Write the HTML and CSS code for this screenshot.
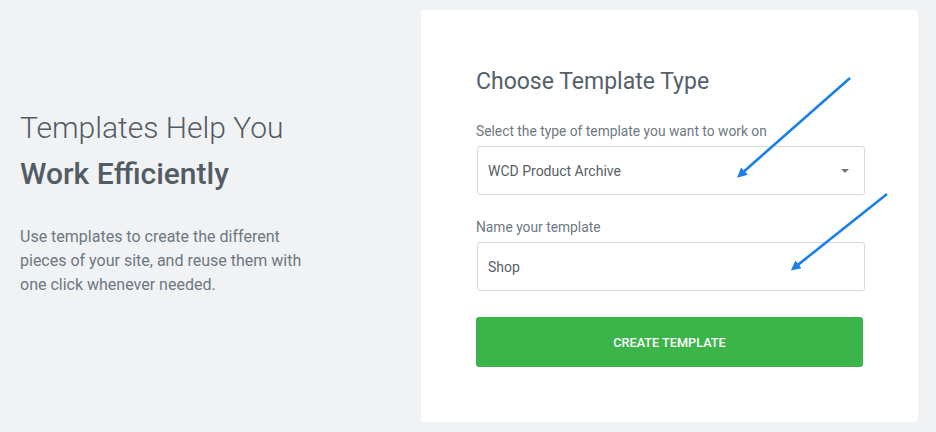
FILE: index.html
```html
<!DOCTYPE html>
<html lang="en">
<head>
    <meta charset="UTF-8">
    <meta name="viewport" content="width=device-width, initial-scale=1.0">
    <title>New Template</title>
    <link rel="stylesheet" href="styles.css">
</head>
<body>

    <div class="page">
        <div class="intro">
            <h1 class="intro-title">Templates Help You <span>Work Efficiently</span></h1>
            <p class="intro-text">Use templates to create the different pieces of your site, and reuse them with one click whenever needed.</p>
        </div>

        <form class="card">
            <h2 class="card-title">Choose Template Type</h2>

            <label class="field-label" for="templateType">Select the type of template you want to work on</label>
            <div class="select-wrap">
                <select id="templateType" class="field">
                    <option>WCD Product Archive</option>
                </select>
            </div>

            <label class="field-label name-label" for="templateName">Name your template</label>
            <input id="templateName" class="field" type="text" value="Shop">

            <button type="button" class="create-btn">Create Template</button>
        </form>
    </div>

    <!-- annotation arrows drawn over the screenshot -->
    <svg class="arrows" width="936" height="432" viewBox="0 0 936 432">
        <defs>
            <marker id="head" markerWidth="10" markerHeight="10" refX="6" refY="5" orient="auto" markerUnits="userSpaceOnUse" viewBox="0 0 10 10">
                <path d="M0 0 L10 5 L0 10 Z" fill="#1a80e8"/>
            </marker>
        </defs>
        <line x1="850" y1="78" x2="740" y2="175" stroke="#1a80e8" stroke-width="2.6" marker-end="url(#head)"/>
        <line x1="887" y1="194" x2="794" y2="268" stroke="#1a80e8" stroke-width="2.6" marker-end="url(#head)"/>
    </svg>

</body>
</html>
```

FILE: styles.css
```css
body {
    margin: 0;
    padding: 0;
    background-color: #f1f2f4;
    font-family: Roboto, "Liberation Sans", sans-serif;
    color: #556068;
}

.page {
    display: flex;
    height: 432px;
    box-sizing: border-box;
    padding: 10px 18px 10px 20px;
}

.intro {
    width: 401px;
    align-self: center;
    padding-bottom: 30px;
}

.intro-title {
    margin: 0;
    font-size: 30px;
    font-weight: 300;
    line-height: 46px;
    color: #525c65;
}

.intro-title span {
    display: block;
    font-weight: 500;
}

.intro-text {
    margin: 28px 0 0;
    width: 290px;
    font-size: 16px;
    line-height: 24px;
    color: #6d7882;
}

.card {
    position: relative;
    width: 497px;
    box-sizing: border-box;
    padding: 58px 55px 55px;
    background-color: #fff;
    border-radius: 3px;
}

.card-title {
    margin: 0 0 27px;
    font-size: 23px;
    font-weight: 400;
    line-height: 27px;
    color: #556068;
}

.field-label {
    display: block;
    font-size: 13.8px;
    line-height: 18px;
    color: #6d7882;
    margin-bottom: 6px;
}

.name-label {
    margin-top: 23px;
}

.select-wrap {
    position: relative;
}

.select-wrap::after {
    content: "";
    position: absolute;
    right: 14px;
    top: 23px;
    border-left: 4px solid transparent;
    border-right: 4px solid transparent;
    border-top: 4px solid #6d7882;
}

.field {
    display: block;
    width: 388px;
    height: 49px;
    box-sizing: border-box;
    margin-left: 1px;
    padding: 0 10px;
    border: 1px solid #d5dadf;
    border-radius: 3px;
    background-color: #fff;
    font-family: inherit;
    font-size: 14px;
    color: #556068;
    appearance: none;
    -webkit-appearance: none;
    outline: none;
}

.create-btn {
    display: block;
    width: 387px;
    height: 50px;
    margin-top: 26px;
    border: none;
    border-radius: 3px;
    background-color: #3bb54a;
    color: #fff;
    font-family: inherit;
    font-size: 12.7px;
    font-weight: 500;
    text-transform: uppercase;
    cursor: pointer;
}

.create-btn:hover {
    background-color: #34a543;
}

.arrows {
    position: absolute;
    left: 0;
    top: 0;
    pointer-events: none;
}
```
